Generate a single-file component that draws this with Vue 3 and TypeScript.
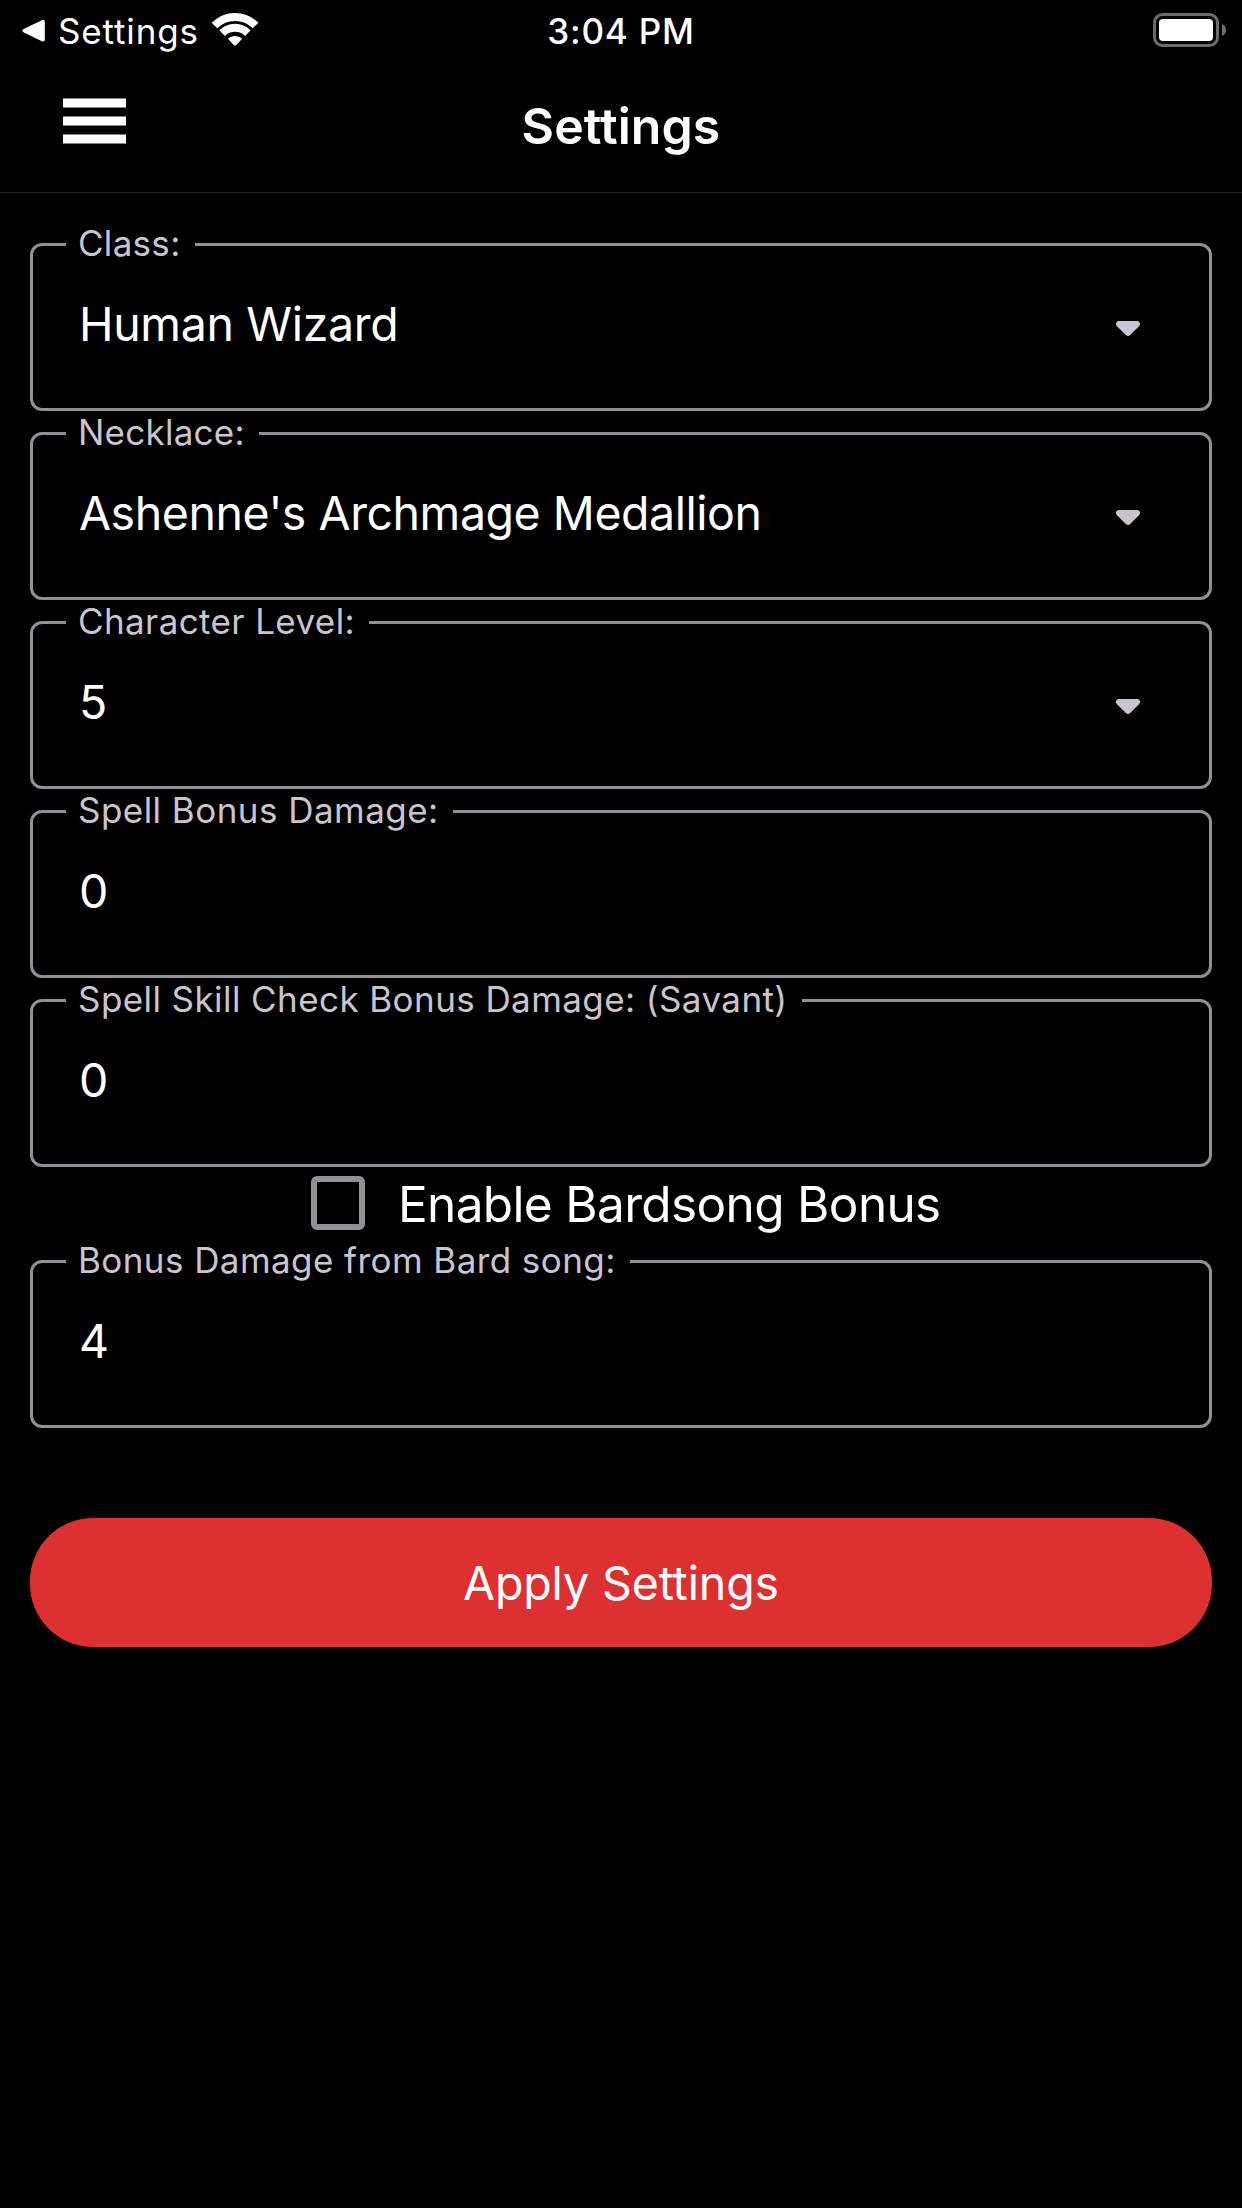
<script setup lang="ts">
import { reactive, ref } from 'vue'

interface Field {
  id: string
  label: string
  value: string
  select?: boolean
  labelSpacing: string
  valueSpacing?: string
}

const fields = reactive<Field[]>([
  { id: 'class', label: 'Class:', value: 'Human Wizard', select: true, labelSpacing: '0.3px', valueSpacing: '-0.35px' },
  { id: 'necklace', label: 'Necklace:', value: "Ashenne's Archmage Medallion", select: true, labelSpacing: '0.25px', valueSpacing: '-0.46px' },
  { id: 'level', label: 'Character Level:', value: '5', select: true, labelSpacing: '0.39px' },
  { id: 'spell', label: 'Spell Bonus Damage:', value: '0', labelSpacing: '0.46px' },
  { id: 'savant', label: 'Spell Skill Check Bonus Damage: (Savant)', value: '0', labelSpacing: '0.42px' },
])

const bardField: Field = { id: 'bard', label: 'Bonus Damage from Bard song:', value: '4', labelSpacing: '0.43px' }
const bardsong = ref(false)
</script>

<template>
  <main class="screen">
    <div class="status">
      <div class="status-left">
        <svg class="back" width="24" height="24" viewBox="0 0 24 24">
          <path d="M1.6 10.1 19.8 1.2Q22.8 0 22.8 3V20.6Q22.8 23.4 19.8 22.2L1.6 13.3Q-.8 11.7 1.6 10.1Z" fill="#fff" />
        </svg>
        <span class="status-app">Settings</span>
        <svg class="wifi" width="48" height="36" viewBox="0 0 48 36">
          <g fill="none" stroke="#fff">
            <path d="M3.5 12.5A29 29 0 0 1 44.5 12.5" stroke-width="8" />
            <path d="M11.13 20.13A18.2 18.2 0 0 1 36.87 20.13" stroke-width="8" />
          </g>
          <path d="M16.8 25.8A10.4 10.4 0 0 1 31.2 25.8L25 32.2Q24 33.1 23 32.2Z" fill="#fff" />
        </svg>
      </div>
      <span class="status-time">3:04 PM</span>
      <div class="status-right">
        <svg width="74" height="36" viewBox="0 0 74 36">
          <rect x="1.5" y="2.5" width="63" height="31" rx="8" fill="none" stroke="#6c6c6c" stroke-width="3" />
          <rect x="6" y="7" width="54" height="22" rx="4" fill="#fff" />
          <path d="M69 12Q73 13.6 73 18T69 24Z" fill="#6c6c6c" />
        </svg>
      </div>
    </div>

    <header class="header">
      <button class="menu" aria-label="Menu">
        <svg width="63" height="46" viewBox="0 0 63 46" fill="#fff">
          <rect y=".5" width="63" height="9" />
          <rect y="18.5" width="63" height="9" />
          <rect y="36.5" width="63" height="9" />
        </svg>
      </button>
      <h1 class="title">Settings</h1>
    </header>

    <section class="form">
      <div v-for="f in fields" :key="f.id" class="field">
        <span class="label" :style="{ letterSpacing: f.labelSpacing }">{{ f.label }}</span>
        <span class="value" :style="{ letterSpacing: f.valueSpacing }">{{ f.value }}</span>
        <svg v-if="f.select" class="caret" width="24" height="15" viewBox="0 0 24 15">
          <path d="M3 0H21C23.9 0 25 3.2 23 5.2L14.2 13.9Q12 15.9 9.8 13.9L1 5.2C-1 3.2 .1 0 3 0Z" fill="#cac4d0" />
        </svg>
      </div>

      <div class="check-row" @click="bardsong = !bardsong">
        <span class="box" role="checkbox" :aria-checked="bardsong"></span>
        <span class="check-label">Enable Bardsong Bonus</span>
      </div>

      <div class="field">
        <span class="label" :style="{ letterSpacing: bardField.labelSpacing }">{{ bardField.label }}</span>
        <span class="value">{{ bardField.value }}</span>
      </div>

      <button class="apply">Apply Settings</button>
    </section>
  </main>
</template>

<style>
body {
  background: #000;
}
</style>

<style scoped>
.screen {
  box-sizing: border-box;
  width: 1242px;
  height: 2208px;
  overflow: hidden;
  background: #000;
  color: #fff;
  font-family: Inter, "Liberation Sans", sans-serif;
}

svg {
  display: block;
  flex: none;
}

button {
  border: 0;
  padding: 0;
  color: inherit;
  font-family: inherit;
}

.status {
  display: grid;
  grid-template-columns: 1fr auto 1fr;
  height: 62px;
  font-size: 35px;
  line-height: 62px;
}

.status-left {
  display: flex;
  padding-left: 22px;
}

.back {
  margin-top: 19px;
}

.status-app {
  margin-left: 12px;
  letter-spacing: 0.85px;
}

.wifi {
  margin: 13px 0 0 12px;
}

.status-time {
  font-weight: 500;
  letter-spacing: 0.8px;
}

.status-right {
  display: flex;
  justify-content: flex-end;
  padding: 12px 15px 0 0;
}

.header {
  display: grid;
  grid-template-columns: 1fr auto 1fr;
  height: 130px;
  border-bottom: 1px solid #272729;
}

.menu {
  justify-self: start;
  align-self: start;
  margin: 36px 0 0 63px;
  background: none;
}

.title {
  margin: 34px 0 0;
  font-size: 50px;
  line-height: 60px;
  font-weight: 600;
  letter-spacing: 0.07px;
}

.form {
  display: flex;
  flex-direction: column;
  padding: 50px 30px 0;
}

.field {
  position: relative;
  box-sizing: border-box;
  display: flex;
  align-items: flex-start;
  justify-content: space-between;
  height: 168px;
  padding: 48px 69px 0 46px;
  border: 3px solid #938f99;
  border-radius: 12px;
}

.field + .field {
  margin-top: 21px;
}

.label {
  position: absolute;
  top: -22px;
  left: 33px;
  padding: 0 14px 0 12px;
  background: #000;
  color: #cac4d0;
  font-size: 35px;
  line-height: 38px;
  white-space: nowrap;
}

.value {
  font-size: 46.5px;
  line-height: 60px;
  white-space: nowrap;
}

.caret {
  margin-top: 27px;
}

.check-row {
  display: flex;
  align-items: flex-start;
  height: 93px;
  padding-left: 281px;
}

.box {
  box-sizing: border-box;
  flex: none;
  width: 54px;
  height: 54px;
  margin-top: 9px;
  border: 6px solid #938f99;
  border-radius: 6px;
}

.check-label {
  margin: 7px 0 0 33px;
  font-size: 49.5px;
  line-height: 60px;
  letter-spacing: -0.65px;
  white-space: nowrap;
}

.apply {
  height: 129px;
  margin-top: 90px;
  padding-top: 1px;
  border-radius: 63px;
  background: #dd3030;
  font-size: 46.5px;
  line-height: 128px;
  letter-spacing: -0.12px;
}
</style>
